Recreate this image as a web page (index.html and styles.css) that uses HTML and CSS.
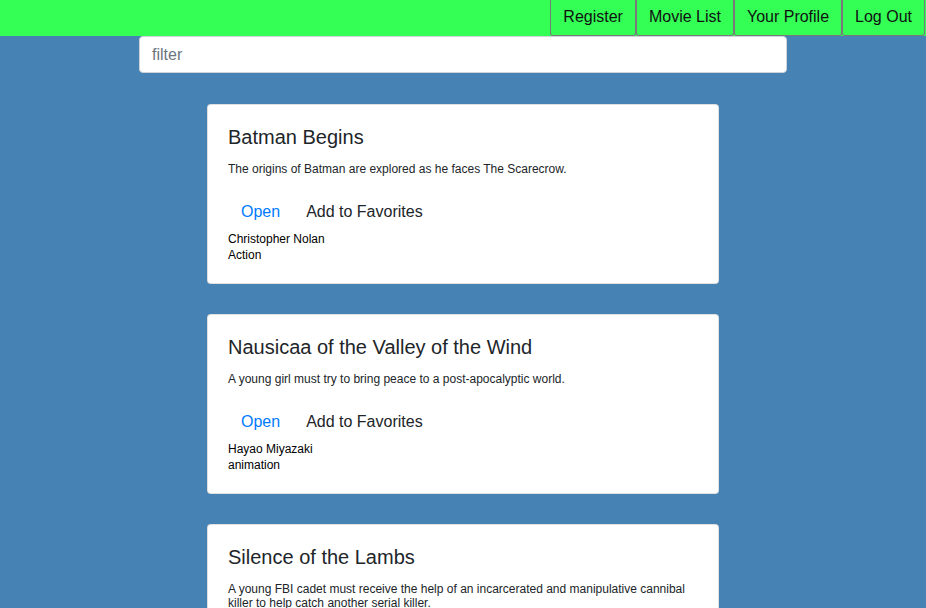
FILE: index.html
```html
<!DOCTYPE html>
<html>
<head>
<meta charset="utf-8">
<link rel="stylesheet" href="styles.css">
</head>
<body>
<nav class="topbar">
  <button class="nav-btn">Register</button>
  <button class="nav-btn">Movie List</button>
  <button class="nav-btn">Your Profile</button>
  <button class="nav-btn">Log Out</button>
</nav>
<main class="main">
  <input class="filter" type="text" placeholder="filter">
  <div class="cards">
    <div class="card">
      <h5 class="card-title">Batman Begins</h5>
      <p class="card-text">The origins of Batman are explored as he faces The Scarecrow.</p>
      <div class="actions">
        <a class="btn btn-link" href="#">Open</a>
        <button class="btn">Add to Favorites</button>
      </div>
      <div class="meta">Christopher Nolan</div>
      <div class="meta">Action</div>
    </div>
    <div class="card">
      <h5 class="card-title">Nausicaa of the Valley of the Wind</h5>
      <p class="card-text">A young girl must try to bring peace to a post-apocalyptic world.</p>
      <div class="actions">
        <a class="btn btn-link" href="#">Open</a>
        <button class="btn">Add to Favorites</button>
      </div>
      <div class="meta">Hayao Miyazaki</div>
      <div class="meta">animation</div>
    </div>
    <div class="card">
      <h5 class="card-title">Silence of the Lambs</h5>
      <p class="card-text">A young FBI cadet must receive the help of an incarcerated and manipulative cannibal killer to help catch another serial killer.</p>
      <div class="actions">
        <a class="btn btn-link" href="#">Open</a>
        <button class="btn">Add to Favorites</button>
      </div>
      <div class="meta">Jonathan Demme</div>
      <div class="meta">Thriller</div>
    </div>
  </div>
</main>
</body>
</html>
```
FILE: styles.css
```css
html, body {
  margin: 0;
  padding: 0;
}
body {
  background: #4682b4;
  font-family: "Liberation Sans", Arial, sans-serif;
  color: #212529;
  overflow: hidden;
  height: 608px;
}
.topbar {
  background: #33ff55;
  height: 36px;
  display: flex;
  justify-content: flex-end;
  padding-right: 1px;
}
.nav-btn {
  background: #33ff55;
  border: 1px solid #7a7a7a;
  border-top: none;
  border-radius: 0 0 3px 3px;
  font-family: "Liberation Sans", Arial, sans-serif;
  font-size: 16px;
  color: #111;
  padding: 0 12px 2px;
  height: 36px;
  margin: 0;
  cursor: pointer;
}
.main {
  display: flex;
  flex-direction: column;
  align-items: center;
}
.filter {
  box-sizing: border-box;
  width: 648px;
  height: 37px;
  margin: 0;
  padding: 6px 12px;
  border: 1px solid #ced4da;
  border-radius: 4px;
  font-family: "Liberation Sans", Arial, sans-serif;
  font-size: 16px;
  color: #495057;
  background: #fff;
}
.filter::placeholder {
  color: #6c757d;
}
.cards {
  margin-top: 31px;
  display: flex;
  flex-direction: column;
  gap: 30px;
}
.card {
  box-sizing: border-box;
  width: 512px;
  height: 180px;
  background: #fff;
  border: 1px solid rgba(0,0,0,0.125);
  border-radius: 4px;
  padding: 20px;
}
.card-title {
  margin: 0 0 13px;
  font-size: 20px;
  font-weight: 400;
  line-height: 24px;
}
.card-text {
  margin: 0 0 17px;
  font-size: 12px;
  line-height: 14px;
}
.actions {
  display: flex;
}
.btn {
  display: inline-block;
  font-family: "Liberation Sans", Arial, sans-serif;
  font-size: 16px;
  line-height: 24px;
  padding: 6px 12px;
  border: 1px solid transparent;
  background: transparent;
  color: #212529;
  text-decoration: none;
  margin: 0;
  cursor: pointer;
}
.btn-link {
  color: #007bff;
}
.meta {
  font-size: 12px;
  line-height: 16px;
  color: #000;
}
```
